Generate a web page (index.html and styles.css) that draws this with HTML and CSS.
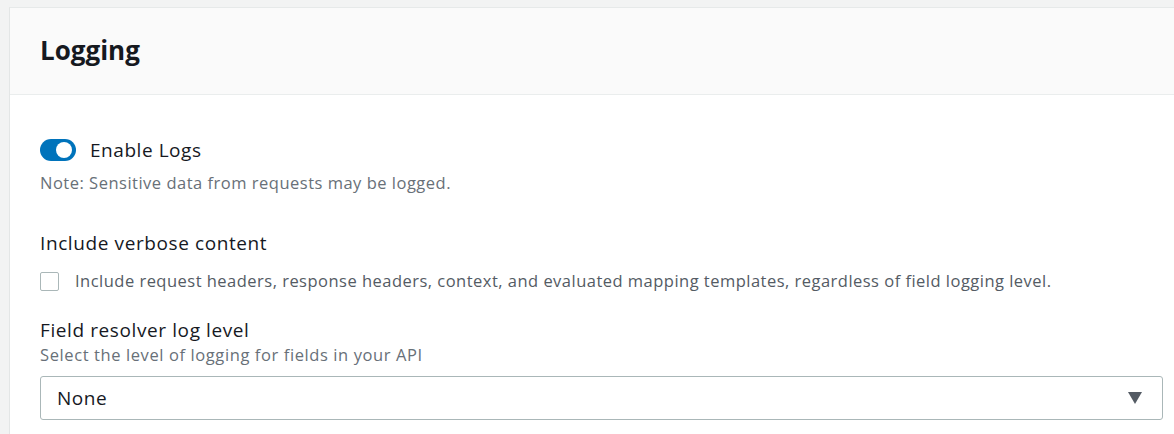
FILE: index.html
```html
<!DOCTYPE html>
<html>
<head>
<meta charset="utf-8">
<link rel="stylesheet" href="styles.css">
</head>
<body>
<div class="page">
  <section class="card">
    <header class="card-header">
      <h2 class="title">Logging</h2>
    </header>
    <div class="card-body">
      <div class="toggle-row">
        <span class="toggle"><span class="knob"></span></span>
        <span class="toggle-label">Enable Logs</span>
      </div>
      <p class="note">Note: Sensitive data from requests may be logged.</p>

      <div class="field verbose">
        <div class="label">Include verbose content</div>
        <label class="check-row">
          <span class="checkbox"></span>
          <span class="check-text">Include request headers, response headers, context, and evaluated mapping templates, regardless of field logging level.</span>
        </label>
      </div>

      <div class="field resolver">
        <div class="label">Field resolver log level</div>
        <div class="desc">Select the level of logging for fields in your API</div>
        <div class="select">
          <span class="select-value">None</span>
          <svg class="caret" width="14" height="12" viewBox="0 0 14 12"><polygon points="0,0 14,0 7,12" fill="#545b64"/></svg>
        </div>
      </div>
    </div>
  </section>
</div>
</body>
</html>
```

FILE: styles.css
```css
html, body {
  margin: 0;
  padding: 0;
  background: #f2f3f3;
  overflow: hidden;
  font-family: "Open Sans", "Noto Sans", sans-serif;
  color: #16191f;
}

.page {
  padding: 7px 0 0 9px;
}

.card {
  margin-right: -19px;
  background: #ffffff;
  border-left: 1px solid #e3e6e6;
  border-top: 1px solid #e6e9e9;
  min-height: 440px;
}

.card-header {
  height: 87px;
  background: #fafafa;
  border-bottom: 1px solid #eaeded;
  display: flex;
  align-items: center;
  padding: 0 30px 3px 30px;
  box-sizing: border-box;
}

.title {
  margin: 0;
  font-size: 26px;
  font-weight: 700;
  line-height: 30px;
  color: #16191f;
}

.card-body {
  padding: 44px 30px 30px 30px;
}

.toggle-row {
  display: flex;
  align-items: center;
  gap: 14px;
  height: 22px;
}

.toggle {
  width: 36px;
  height: 22px;
  border-radius: 11px;
  background: #0073bb;
  position: relative;
  flex: none;
}

.knob {
  position: absolute;
  top: 3px;
  right: 4px;
  width: 16px;
  height: 16px;
  border-radius: 50%;
  background: #ffffff;
}

.toggle-label {
  font-size: 19px;
  letter-spacing: 0.55px;
  line-height: 22px;
}

.note {
  margin: 11px 0 0 0;
  font-size: 16.5px;
  letter-spacing: 0.5px;
  line-height: 22px;
  color: #687078;
}

.field {
  margin-top: 38px;
}

.label {
  font-size: 19px;
  letter-spacing: 0.6px;
  line-height: 22px;
  color: #16191f;
}

.check-row {
  display: flex;
  align-items: center;
  gap: 16px;
  margin-top: 16px;
}

.checkbox {
  width: 19px;
  height: 19px;
  border: 1px solid #aab7b8;
  border-radius: 2px;
  box-sizing: border-box;
  flex: none;
}

.check-text {
  font-size: 16.5px;
  letter-spacing: 0.48px;
  line-height: 22px;
  color: #545b64;
}

.field.resolver {
  margin-top: 27px;
}

.desc {
  font-size: 16.5px;
  letter-spacing: 0.6px;
  line-height: 20px;
  color: #687078;
  margin-top: 4px;
}

.select {
  margin-top: 11px;
  height: 44px;
  border: 1px solid #aab7b8;
  border-radius: 3px;
  box-sizing: border-box;
  display: flex;
  align-items: center;
  justify-content: space-between;
  padding: 0 20px 0 16px;
  background: #ffffff;
}

.select-value {
  font-size: 19px;
  letter-spacing: 0.5px;
  color: #16191f;
}

.caret {
  display: block;
}
```
